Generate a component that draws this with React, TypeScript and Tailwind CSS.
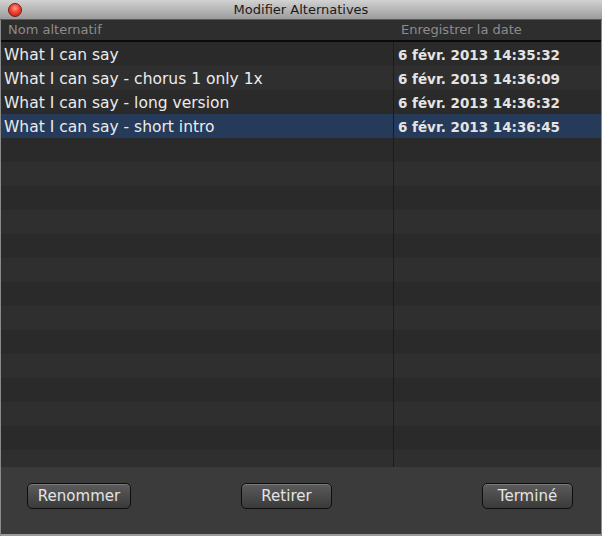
import React from 'react';

const rows = [
  { name: 'What I can say', date: '6 févr. 2013 14:35:32' },
  { name: 'What I can say - chorus 1 only 1x', date: '6 févr. 2013 14:36:09' },
  { name: 'What I can say - long version', date: '6 févr. 2013 14:36:32' },
  { name: 'What I can say - short intro', date: '6 févr. 2013 14:36:45' },
];

const Button: React.FC<{ label: string; w: string }> = ({ label, w }) => (
  <button
    className={`${w} h-[26px] rounded-[5px] border border-[#0e0e0e] bg-gradient-to-b from-[#5c5c5c] to-[#3a3a3a] text-[15px] text-[#e4e4e4] shadow-[inset_0_1px_0_rgba(255,255,255,0.18)]`}
  >
    {label}
  </button>
);

const App: React.FC = () => {
  const filler = Array.from({ length: 18 });

  return (
    <div className="w-[602px] h-[536px] flex flex-col overflow-hidden bg-[#3b3b3b] font-['DejaVu_Sans',Verdana,sans-serif] select-none">
      {/* Title bar */}
      <div className="relative h-[20px] flex items-center justify-center bg-gradient-to-b from-[#d2d2d2] to-[#9c9c9c] border-b border-[#5a5a5a]">
        <span className="absolute left-[8px] top-[3px] w-[14px] h-[14px] rounded-full border border-[#7a1a14] bg-[radial-gradient(circle_at_50%_35%,#ff9a8e_0%,#f2412f_45%,#b51c10_100%)]" />
        <span className="text-[13px] text-[#1a1a1a] leading-none">Modifier Alternatives</span>
      </div>

      <div className="flex-1 flex flex-col border-x border-[#8a8a8a] min-h-0">
        {/* Column header */}
        <div className="h-[22px] flex items-center bg-[#2e2e2e] border-b-2 border-[#0a0a0a] text-[13px] text-[#8c8c8c]">
          <div className="w-[392px] pl-[7px]">Nom alternatif</div>
          <div className="flex-1 pl-[8px]">Enregistrer la date</div>
        </div>

        {/* List */}
        <div className="flex-1 min-h-0 overflow-hidden relative">
          {rows.map((r, i) => {
            const selected = i === 3;
            return (
              <div
                key={r.name}
                className={`h-[24px] flex items-center ${selected ? 'bg-[#263a5a]' : i % 2 === 0 ? 'bg-[#2a2a2b]' : 'bg-[#2f2f30]'}`}
              >
                <div className="w-[392px] pl-[3px] pt-[3px] text-[15.5px] text-[#ebebeb] whitespace-nowrap">{r.name}</div>
                <div className="flex-1 h-full flex items-center pl-[4px] pt-[3px] border-l border-[#1c1c1c] text-[13.5px] font-bold text-[#e4e4e4] whitespace-nowrap">
                  {r.date}
                </div>
              </div>
            );
          })}
          {filler.map((_, i) => (
            <div
              key={i}
              className={`h-[24px] flex ${i % 2 === 0 ? 'bg-[#2a2a2b]' : 'bg-[#2f2f30]'}`}
            >
              <div className="w-[392px]" />
              <div className="flex-1 border-l border-[#1c1c1c]" />
            </div>
          ))}
        </div>

        {/* Footer */}
        <div className="h-[69px] shrink-0 bg-[#3b3b3b] flex items-start pl-[26px] pr-[28px] pt-[16px] border-b-2 border-[#9a9a9a]">
          <Button label="Renommer" w="w-[104px]" />
          <div className="ml-[110px]">
            <Button label="Retirer" w="w-[91px]" />
          </div>
          <div className="ml-auto">
            <Button label="Terminé" w="w-[91px]" />
          </div>
        </div>
      </div>
    </div>
  );
};

export default App;
